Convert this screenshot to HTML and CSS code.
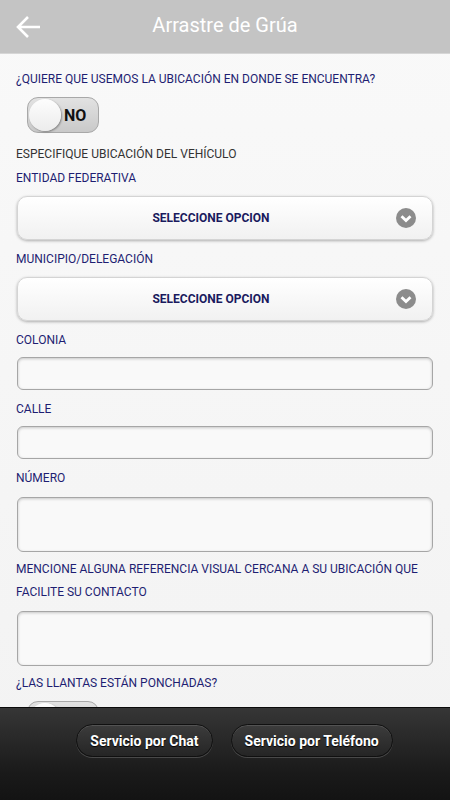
FILE: index.html
```html
<!DOCTYPE html>
<html lang="es">
<head>
  <meta charset="UTF-8">
  <meta name="viewport" content="width=device-width, initial-scale=1.0">
  <title>Arrastre de Grúa</title>
  <link rel="stylesheet" href="styles.css">
</head>
<body>
  <header class="topbar">
    <svg class="back" width="26" height="24" viewBox="0 0 26 24">
      <path d="M25 12H3 M13 2L3 12l10 10" fill="none" stroke="#fff" stroke-width="2.6"/>
    </svg>
    <h1>Arrastre de Grúa</h1>
  </header>

  <main class="form">
    <p class="label">¿QUIERE QUE USEMOS LA UBICACIÓN EN DONDE SE ENCUENTRA?</p>
    <div class="toggle"><span class="knob"></span><span class="toggle-text">NO</span></div>

    <p class="label dark">ESPECIFIQUE UBICACIÓN DEL VEHÍCULO</p>

    <p class="label">ENTIDAD FEDERATIVA</p>
    <div class="select">
      <span>SELECCIONE OPCION</span>
      <svg class="caret" width="20" height="20" viewBox="0 0 20 20">
        <circle cx="10" cy="10" r="10" fill="#8c8c8c"/>
        <path d="M5.5 8.2L10 12.6l4.5-4.4" fill="none" stroke="#fff" stroke-width="2.8"/>
      </svg>
    </div>

    <p class="label">MUNICIPIO/DELEGACIÓN</p>
    <div class="select">
      <span>SELECCIONE OPCION</span>
      <svg class="caret" width="20" height="20" viewBox="0 0 20 20">
        <circle cx="10" cy="10" r="10" fill="#8c8c8c"/>
        <path d="M5.5 8.2L10 12.6l4.5-4.4" fill="none" stroke="#fff" stroke-width="2.8"/>
      </svg>
    </div>

    <p class="label">COLONIA</p>
    <input class="field" type="text">

    <p class="label">CALLE</p>
    <input class="field" type="text">

    <p class="label">NÚMERO</p>
    <textarea class="field area"></textarea>

    <p class="label">MENCIONE ALGUNA REFERENCIA VISUAL CERCANA A SU UBICACIÓN QUE FACILITE SU CONTACTO</p>
    <textarea class="field area"></textarea>

    <p class="label">¿LAS LLANTAS ESTÁN PONCHADAS?</p>
    <div class="toggle"><span class="knob"></span><span class="toggle-text">NO</span></div>
  </main>

  <footer class="bottombar">
    <button class="pill">Servicio por Chat</button>
    <button class="pill">Servicio por Teléfono</button>
  </footer>
</body>
</html>
```

FILE: styles.css
```css
html {
  background: linear-gradient(#f9f9f9, #f3f3f3);
}

body {
  font-family: Roboto, "Liberation Sans", sans-serif;
  margin: 0;
}

/* top bar */
.topbar {
  height: 53px;
  background-color: #c4c4c4;
  border-bottom: 1px solid #d6d6d6;
  display: flex;
  align-items: center;
  justify-content: center;
  position: relative;
}

.topbar h1 {
  margin: 0;
  font-size: 20px;
  font-weight: 400;
  color: #fff;
  padding-bottom: 3px;
}

.back {
  position: absolute;
  left: 15px;
  top: 15px;
}

/* form */
.form {
  padding: 14px 16px 0;
  display: flex;
  flex-direction: column;
}

.label {
  margin: 0;
  font-size: 12px;
  line-height: 23px;
  color: #1e1e72;
}

.label.dark {
  color: #333;
  margin-bottom: 1px;
}

.toggle {
  width: 70px;
  height: 34px;
  margin: 6px 0 10px 11px;
  border: 1px solid #a8a8a8;
  border-radius: 11px;
  background: linear-gradient(#e2e2e2, #c9c9c9);
  display: flex;
  align-items: center;
}

.knob {
  width: 32px;
  height: 32px;
  margin-left: 1px;
  border-radius: 50%;
  background: linear-gradient(#fdfdfd, #ececec);
  box-shadow: 1px 1px 2px rgba(0, 0, 0, 0.35);
}

.toggle-text {
  margin-left: 3px;
  font-size: 16px;
  font-weight: 700;
  color: #111;
}

.select {
  height: 44px;
  margin: 6px 1px 8px;
  border: 1px solid #d4d4d4;
  border-radius: 10px;
  background: linear-gradient(#ffffff, #f1f1f1);
  box-shadow: 0 1px 3px rgba(0, 0, 0, 0.3);
  box-sizing: border-box;
  display: flex;
  align-items: center;
  justify-content: center;
  position: relative;
}

.select span {
  font-size: 12px;
  font-weight: 700;
  color: #1a1a5e;
  margin-right: 28px;
}

.caret {
  position: absolute;
  right: 16px;
  top: 11px;
}

.field {
  height: 33px;
  margin: 5px 1px 8px;
  border: 1px solid #a6a6a6;
  border-radius: 6px;
  background-color: #f9f9f9;
  box-shadow: inset 0 1px 3px rgba(0, 0, 0, 0.2);
  box-sizing: border-box;
  padding: 4px 8px;
  font-family: inherit;
  font-size: 14px;
  resize: none;
}

.area {
  height: 55px;
  margin-top: 7px;
  margin-bottom: 6px;
}

/* bottom bar */
.bottombar {
  position: fixed;
  left: 0;
  right: 0;
  bottom: 0;
  height: 93px;
  border-top: 1px solid #0b0b0b;
  background: linear-gradient(#363636, #1a1a1a 70%, #131313);
  display: flex;
  justify-content: center;
  align-items: flex-start;
  gap: 18px;
  padding: 16px 0 0 19px;
  box-sizing: border-box;
}

.pill {
  height: 33px;
  padding: 0 13px;
  border: 1px solid #101010;
  border-radius: 17px;
  background: linear-gradient(#3c3c3c, #252525);
  box-shadow: 0 1px 0 rgba(255, 255, 255, 0.18), inset 0 1px 0 rgba(255, 255, 255, 0.12);
  color: #fff;
  font-family: inherit;
  font-size: 14px;
  font-weight: 700;
  text-shadow: 0 1px 1px #000;
  cursor: pointer;
}
```
